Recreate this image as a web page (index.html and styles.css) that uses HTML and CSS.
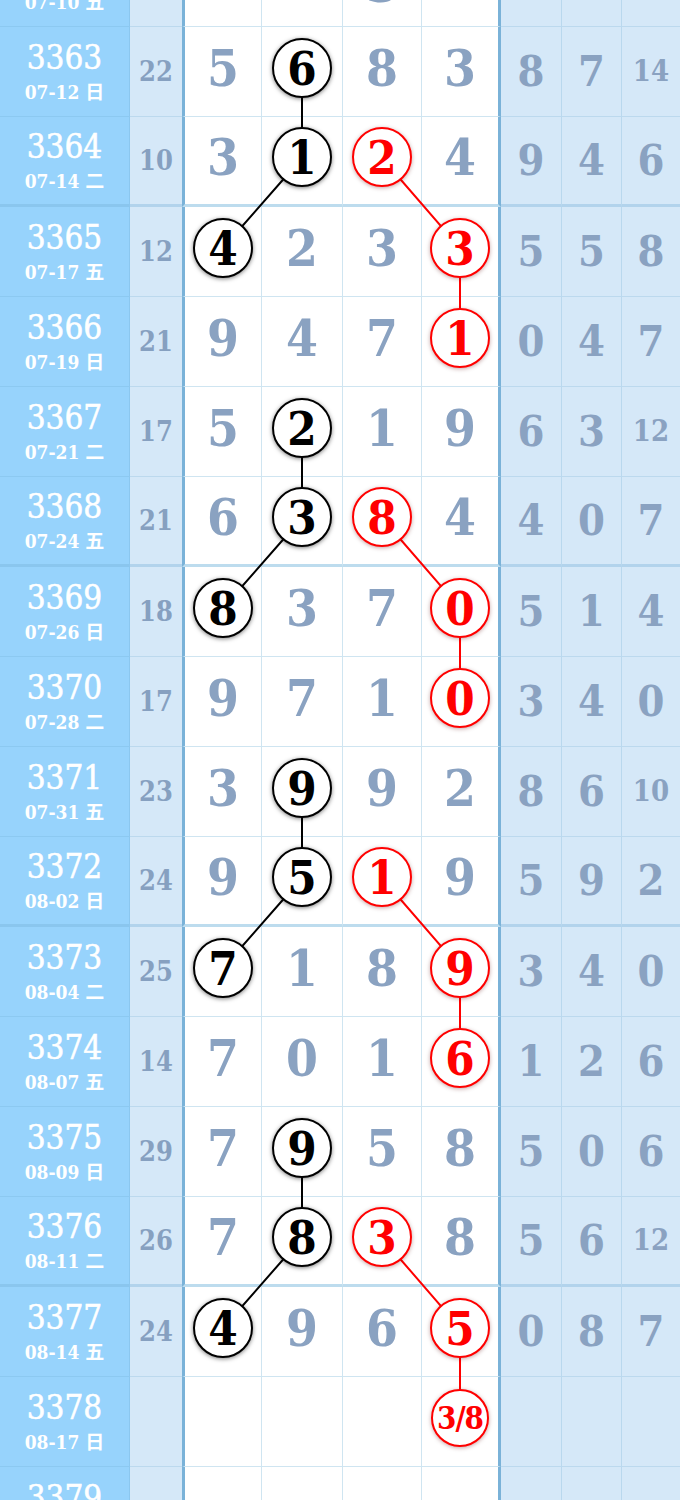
FILE: index.html
```html
<!DOCTYPE html>
<html lang="zh">
<head>
<meta charset="utf-8">
<title>走势图</title>
<link rel="stylesheet" href="styles.css">
</head>
<body>
<div class="board">
  <svg class="links" width="680" height="1620" viewBox="0 0 680 1620">
    <g stroke="#000" stroke-width="2" fill="none">
      <polyline points="302,131 302,221 223,311"/>
      <polyline points="302,491 302,581 223,671"/>
      <polyline points="302,851 302,941 223,1031"/>
      <polyline points="302,1211 302,1301 223,1391"/>
    </g>
    <g stroke="#f00" stroke-width="2" fill="none">
      <polyline points="382,221 460,311 460,401"/>
      <polyline points="382,581 460,671 460,761"/>
      <polyline points="382,941 460,1031 460,1121"/>
      <polyline points="382,1301 460,1391 460,1481"/>
    </g>
  </svg>

  <div class="row">
    <div class="issue"><span class="no">3362</span><span class="date">07-10 五</span></div>
    <div class="sum"></div>
    <div class="dg first"></div><div class="dg"></div><div class="dg"><span class="low">3</span></div><div class="dg last"></div>
    <div class="rt"></div><div class="rt"></div><div class="rt"></div>
  </div>
  <div class="row">
    <div class="issue"><span class="no">3363</span><span class="date">07-12 日</span></div>
    <div class="sum">22</div>
    <div class="dg first"><span>5</span></div><div class="dg"><span class="ball">6</span></div><div class="dg"><span>8</span></div><div class="dg last"><span>3</span></div>
    <div class="rt">8</div><div class="rt">7</div><div class="rt"><span class="two">14</span></div>
  </div>
  <div class="row sep">
    <div class="issue"><span class="no">3364</span><span class="date">07-14 二</span></div>
    <div class="sum">10</div>
    <div class="dg first"><span>3</span></div><div class="dg"><span class="ball">1</span></div><div class="dg"><span class="ball red">2</span></div><div class="dg last"><span>4</span></div>
    <div class="rt">9</div><div class="rt">4</div><div class="rt">6</div>
  </div>
  <div class="row">
    <div class="issue"><span class="no">3365</span><span class="date">07-17 五</span></div>
    <div class="sum">12</div>
    <div class="dg first"><span class="ball">4</span></div><div class="dg"><span>2</span></div><div class="dg"><span>3</span></div><div class="dg last"><span class="ball red">3</span></div>
    <div class="rt">5</div><div class="rt">5</div><div class="rt">8</div>
  </div>
  <div class="row">
    <div class="issue"><span class="no">3366</span><span class="date">07-19 日</span></div>
    <div class="sum">21</div>
    <div class="dg first"><span>9</span></div><div class="dg"><span>4</span></div><div class="dg"><span>7</span></div><div class="dg last"><span class="ball red">1</span></div>
    <div class="rt">0</div><div class="rt">4</div><div class="rt">7</div>
  </div>
  <div class="row">
    <div class="issue"><span class="no">3367</span><span class="date">07-21 二</span></div>
    <div class="sum">17</div>
    <div class="dg first"><span>5</span></div><div class="dg"><span class="ball">2</span></div><div class="dg"><span>1</span></div><div class="dg last"><span>9</span></div>
    <div class="rt">6</div><div class="rt">3</div><div class="rt"><span class="two">12</span></div>
  </div>
  <div class="row sep">
    <div class="issue"><span class="no">3368</span><span class="date">07-24 五</span></div>
    <div class="sum">21</div>
    <div class="dg first"><span>6</span></div><div class="dg"><span class="ball">3</span></div><div class="dg"><span class="ball red">8</span></div><div class="dg last"><span>4</span></div>
    <div class="rt">4</div><div class="rt">0</div><div class="rt">7</div>
  </div>
  <div class="row">
    <div class="issue"><span class="no">3369</span><span class="date">07-26 日</span></div>
    <div class="sum">18</div>
    <div class="dg first"><span class="ball">8</span></div><div class="dg"><span>3</span></div><div class="dg"><span>7</span></div><div class="dg last"><span class="ball red">0</span></div>
    <div class="rt">5</div><div class="rt">1</div><div class="rt">4</div>
  </div>
  <div class="row">
    <div class="issue"><span class="no">3370</span><span class="date">07-28 二</span></div>
    <div class="sum">17</div>
    <div class="dg first"><span>9</span></div><div class="dg"><span>7</span></div><div class="dg"><span>1</span></div><div class="dg last"><span class="ball red">0</span></div>
    <div class="rt">3</div><div class="rt">4</div><div class="rt">0</div>
  </div>
  <div class="row">
    <div class="issue"><span class="no">3371</span><span class="date">07-31 五</span></div>
    <div class="sum">23</div>
    <div class="dg first"><span>3</span></div><div class="dg"><span class="ball">9</span></div><div class="dg"><span>9</span></div><div class="dg last"><span>2</span></div>
    <div class="rt">8</div><div class="rt">6</div><div class="rt"><span class="two">10</span></div>
  </div>
  <div class="row sep">
    <div class="issue"><span class="no">3372</span><span class="date">08-02 日</span></div>
    <div class="sum">24</div>
    <div class="dg first"><span>9</span></div><div class="dg"><span class="ball">5</span></div><div class="dg"><span class="ball red">1</span></div><div class="dg last"><span>9</span></div>
    <div class="rt">5</div><div class="rt">9</div><div class="rt">2</div>
  </div>
  <div class="row">
    <div class="issue"><span class="no">3373</span><span class="date">08-04 二</span></div>
    <div class="sum">25</div>
    <div class="dg first"><span class="ball">7</span></div><div class="dg"><span>1</span></div><div class="dg"><span>8</span></div><div class="dg last"><span class="ball red">9</span></div>
    <div class="rt">3</div><div class="rt">4</div><div class="rt">0</div>
  </div>
  <div class="row">
    <div class="issue"><span class="no">3374</span><span class="date">08-07 五</span></div>
    <div class="sum">14</div>
    <div class="dg first"><span>7</span></div><div class="dg"><span>0</span></div><div class="dg"><span>1</span></div><div class="dg last"><span class="ball red">6</span></div>
    <div class="rt">1</div><div class="rt">2</div><div class="rt">6</div>
  </div>
  <div class="row">
    <div class="issue"><span class="no">3375</span><span class="date">08-09 日</span></div>
    <div class="sum">29</div>
    <div class="dg first"><span>7</span></div><div class="dg"><span class="ball">9</span></div><div class="dg"><span>5</span></div><div class="dg last"><span>8</span></div>
    <div class="rt">5</div><div class="rt">0</div><div class="rt">6</div>
  </div>
  <div class="row sep">
    <div class="issue"><span class="no">3376</span><span class="date">08-11 二</span></div>
    <div class="sum">26</div>
    <div class="dg first"><span>7</span></div><div class="dg"><span class="ball">8</span></div><div class="dg"><span class="ball red">3</span></div><div class="dg last"><span>8</span></div>
    <div class="rt">5</div><div class="rt">6</div><div class="rt"><span class="two">12</span></div>
  </div>
  <div class="row">
    <div class="issue"><span class="no">3377</span><span class="date">08-14 五</span></div>
    <div class="sum">24</div>
    <div class="dg first"><span class="ball">4</span></div><div class="dg"><span>9</span></div><div class="dg"><span>6</span></div><div class="dg last"><span class="ball red">5</span></div>
    <div class="rt">0</div><div class="rt">8</div><div class="rt">7</div>
  </div>
  <div class="row">
    <div class="issue"><span class="no">3378</span><span class="date">08-17 日</span></div>
    <div class="sum"></div>
    <div class="dg first"></div><div class="dg"></div><div class="dg"></div><div class="dg last"><span class="ball red guess">3/8</span></div>
    <div class="rt"></div><div class="rt"></div><div class="rt"></div>
  </div>
  <div class="row">
    <div class="issue"><span class="no">3379</span><span class="date">08-19 二</span></div>
    <div class="sum"></div>
    <div class="dg first"></div><div class="dg"></div><div class="dg"></div><div class="dg last"></div>
    <div class="rt"></div><div class="rt"></div><div class="rt"></div>
  </div>
</div>
</body>
</html>
```

FILE: styles.css
```css
html, body {
  margin: 0;
  padding: 0;
  background: #fff;
  overflow: hidden;
}

.board {
  position: relative;
  width: 680px;
  margin-top: -63px;
  font-family: "DejaVu Serif Condensed", "DejaVu Serif", "Noto Sans CJK SC", serif;
  font-stretch: condensed;
}

.links {
  position: absolute;
  top: 0;
  left: 0;
  z-index: 0;
  pointer-events: none;
}

.row {
  display: grid;
  grid-template-columns: 130px 52px 80px 81px 79px 79px 61px 60px 58px;
  height: 90px;
}

.row > div {
  box-sizing: border-box;
  display: flex;
  align-items: center;
  justify-content: center;
  border-bottom: 1px solid #cfe5f1;
}

.row.sep > div {
  border-bottom: 3px solid #bddcee;
}

/* issue column */
.issue {
  flex-direction: column;
  background: #97d3fc;
  border-right: 1px solid #8bc7ef;
  color: #fff;
}
.row > .issue { border-bottom-color: #8cc9f1; }
.row.sep > .issue { border-bottom-color: #8ac6ee; }

.no {
  font-size: 33px;
  line-height: 1;
  font-weight: normal;
  -webkit-text-stroke: 0.5px #fff;
}
.date {
  margin-top: 9px;
  font-size: 19px;
  line-height: 1;
  font-weight: bold;
}

/* sum column */
.sum {
  background: #d5e8f8;
  color: #86a0c0;
  font-size: 27px;
  line-height: 1;
  font-weight: bold;
}
.row > .sum { border-bottom-color: #bcd9ee; }
.row.sep > .sum { border-bottom-color: #b2d3ec; }

/* digit columns */
.dg {
  background: #fff;
  border-right: 1px solid #cfe5f1;
  padding-bottom: 7px;
  color: #8aa2c1;
  font-size: 51px;
  line-height: 1;
  font-weight: bold;
}
.dg.first { border-left: 3px solid #7ab2d8; }
.dg.last { border-right: 3px solid #7ab2d8; }

.low {
  margin-top: 12px;
}

.ball {
  position: relative;
  z-index: 1;
  box-sizing: border-box;
  width: 60px;
  height: 60px;
  border-radius: 50%;
  border: 2px solid #000;
  background: #fff;
  color: #000;
  display: flex;
  align-items: center;
  justify-content: center;
  font-size: 47px;
  line-height: 1;
  box-shadow: 0 1px 4px rgba(0, 0, 0, 0.5);
}
.ball.red {
  border-color: #f00;
  color: #f00;
  box-shadow: 0 1px 4px rgba(90, 0, 0, 0.35);
}
.ball.guess {
  width: 58px;
  height: 58px;
  font-size: 31px;
  letter-spacing: -1px;
}

/* right columns */
.rt {
  background: #d5e8f8;
  border-right: 1px solid #b9d8ee;
  color: #8aa2c1;
  font-size: 43px;
  line-height: 1;
  font-weight: bold;
}
.rt:last-child { border-right: 0; }
.row > .rt { border-bottom-color: #bcd9ee; }
.row.sep > .rt { border-bottom-color: #b2d3ec; }

.two {
  font-size: 29px;
}
```
